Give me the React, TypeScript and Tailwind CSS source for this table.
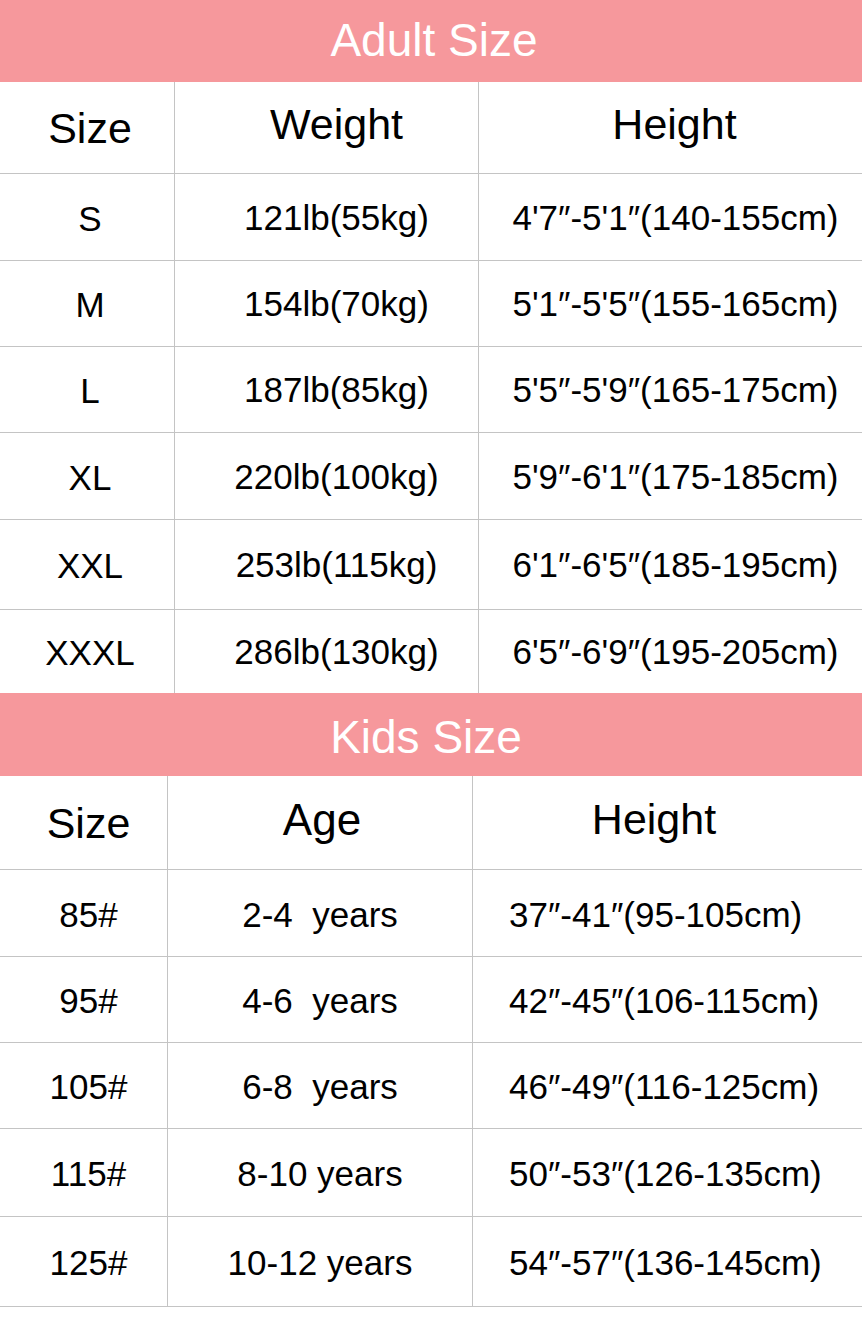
const adultRows = [
  { h: "h-[87px]", size: "S", weight: "121lb(55kg)", height: "4'7″-5'1″(140-155cm)" },
  { h: "h-[86px]", size: "M", weight: "154lb(70kg)", height: "5'1″-5'5″(155-165cm)" },
  { h: "h-[86px]", size: "L", weight: "187lb(85kg)", height: "5'5″-5'9″(165-175cm)" },
  { h: "h-[87px]", size: "XL", weight: "220lb(100kg)", height: "5'9″-6'1″(175-185cm)" },
  { h: "h-[90px]", size: "XXL", weight: "253lb(115kg)", height: "6'1″-6'5″(185-195cm)" },
  { h: "h-[83px]", size: "XXXL", weight: "286lb(130kg)", height: "6'5″-6'9″(195-205cm)", last: true },
];

const kidsRows = [
  { h: "h-[87px]", size: "85#", age: "2-4  years", height: "37″-41″(95-105cm)" },
  { h: "h-[86px]", size: "95#", age: "4-6  years", height: "42″-45″(106-115cm)" },
  { h: "h-[86px]", size: "105#", age: "6-8  years", height: "46″-49″(116-125cm)" },
  { h: "h-[88px]", size: "115#", age: "8-10 years", height: "50″-53″(126-135cm)" },
  { h: "h-[90px]", size: "125#", age: "10-12 years", height: "54″-57″(136-145cm)" },
];

function Banner({ title, className }: { title: string; className: string }) {
  return (
    <div className={`${className} bg-[#f6989c] flex items-center justify-center`}>
      <span className="text-white text-[46px] leading-none">{title}</span>
    </div>
  );
}

export default function App() {
  return (
    <div className="w-[862px] h-[1328px] bg-white text-black overflow-hidden" style={{ fontFamily: '"Liberation Sans", Arial, sans-serif' }}>
      {/* Adult */}
      <Banner title="Adult Size" className="h-[82px] pl-[6px] pb-[3px]" />
      <div className="grid grid-cols-[175px_304px_1fr] h-[92px] border-b border-[#c4c4c4] text-[43px]">
        <div className="flex items-center justify-center border-r border-[#c4c4c4] pl-[6px] pt-[2px]">Size</div>
        <div className="flex items-center justify-center border-r border-[#c4c4c4] pl-[20px] pb-[6px]">Weight</div>
        <div className="flex items-center justify-center pl-[8px] pb-[6px]">Height</div>
      </div>
      {adultRows.map((r) => (
        <div key={r.size} className={`grid grid-cols-[175px_304px_1fr] ${r.h} ${r.last ? "" : "border-b border-[#c4c4c4]"} text-[35px]`}>
          <div className="flex items-center justify-center border-r border-[#c4c4c4] pl-[6px] pt-[4px]">{r.size}</div>
          <div className="flex items-center justify-center border-r border-[#c4c4c4] pl-[20px] pt-[2px]">{r.weight}</div>
          <div className="flex items-center justify-center pl-[10px] pt-[2px]">{r.height}</div>
        </div>
      ))}

      {/* Kids */}
      <Banner title="Kids Size" className="h-[83px] pr-[10px] pt-[4px]" />
      <div className="grid grid-cols-[168px_305px_1fr] h-[94px] border-b border-[#c4c4c4] text-[43px]">
        <div className="flex items-center justify-center border-r border-[#c4c4c4] pl-[10px] pt-[2px]">Size</div>
        <div className="flex items-center justify-center border-r border-[#c4c4c4] pl-[4px] pb-[6px] text-[44px]">Age</div>
        <div className="flex items-center justify-center pr-[27px] pb-[6px]">Height</div>
      </div>
      {kidsRows.map((r) => (
        <div key={r.size} className={`grid grid-cols-[168px_305px_1fr] ${r.h} border-b border-[#c4c4c4] text-[35px]`}>
          <div className="flex items-center justify-center border-r border-[#c4c4c4] pl-[10px] pt-[4px]">{r.size}</div>
          <div className="flex items-center justify-center border-r border-[#c4c4c4] whitespace-pre pt-[4px]">{r.age}</div>
          <div className="flex items-center pl-[36px] pt-[4px]">{r.height}</div>
        </div>
      ))}
    </div>
  );
}
